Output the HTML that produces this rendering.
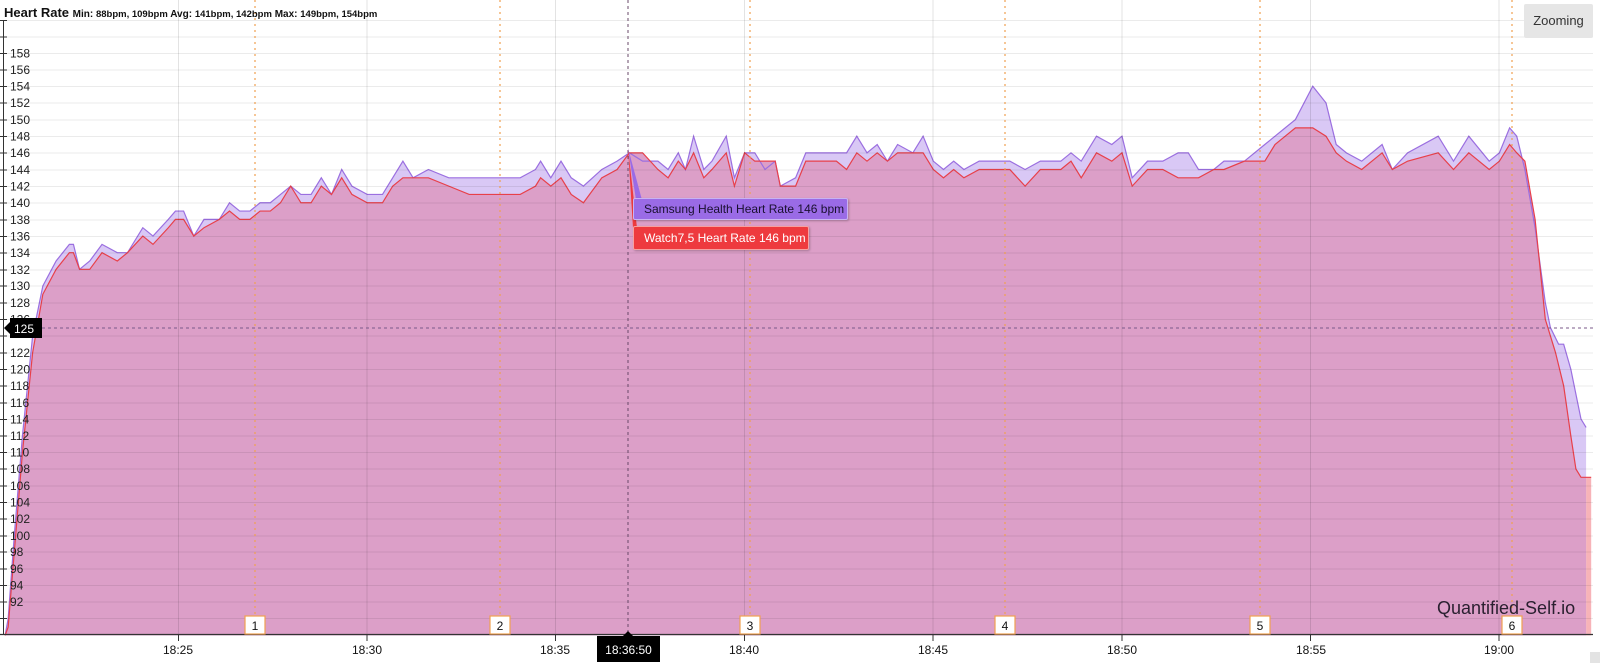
<!DOCTYPE html>
<html><head><meta charset="utf-8"><style>
html,body{margin:0;padding:0;background:#fff;width:1600px;height:663px;overflow:hidden;font-family:"Liberation Sans",sans-serif;}
.a{position:absolute;}
</style></head><body>
<svg class="a" style="left:0;top:0" width="1600" height="663" viewBox="0 0 1600 663">
<g transform="matrix(1.02,0,0,-8.32,0,1367.56)">
<polygon fill="#d9c8f5" stroke="none" points="5,88 8,90 14,100 22,112 32,124 42,130 55,133 68,135 72,135 78,132 88,133 100,135 115,134 125,134 140,137 150,136 165,138 172,139 180,139 190,136 200,138 215,138 225,140 235,139 245,139 255,140 265,140 275,141 285,142 295,141 305,141 315,143 325,141 335,144 345,142 360,141 375,141 385,143 395,145 405,143 420,144 440,143 460,143 480,143 510,143 525,144 530,145 540,143 550,145 560,143 572,142 590,144 605,145 617,146 630,145 645,145 655,144 665,146 672,144 680,148 690,144 698,145 712,148 720,143 730,146 740,146 750,144 760,145 765,142 780,143 790,146 820,146 830,146 840,148 850,146 860,147 870,145 880,147 895,146 905,148 915,145 925,144 935,145 945,144 960,145 975,145 990,145 1005,144 1020,145 1040,145 1050,146 1060,145 1075,148 1090,147 1100,148 1110,143 1125,145 1140,145 1155,146 1165,146 1175,144 1190,144 1200,145 1220,145 1240,147 1250,148 1260,149 1270,150 1287,154 1300,152 1310,147 1320,146 1335,145 1355,147 1365,144 1380,146 1410,148 1425,145 1440,148 1460,145 1470,146 1480,149 1487,148 1495,144 1505,137 1515,128 1520,125 1528,123 1533,123 1540,120 1545,117 1550,114 1555,113 1555,88"/>
<rect x="1555" y="88" width="5" height="19" fill="#f7b3b8"/>
<polygon fill="#dc9fc8" stroke="none" points="5,88 8,89 14,98 22,110 32,122 42,129 55,132 68,134 72,134 78,132 88,132 100,134 115,133 125,134 140,136 150,135 165,137 172,138 180,138 190,136 200,137 215,138 225,139 235,138 245,138 255,139 265,139 275,140 285,142 295,140 305,140 315,142 325,141 335,143 345,141 360,140 375,140 385,142 395,143 405,143 420,143 440,142 460,141 480,141 510,141 525,142 530,143 540,142 550,143 560,141 572,140 590,143 605,144 617,146 630,146 645,144 655,143 665,145 672,144 680,146 690,143 698,144 712,146 720,142 730,146 740,145 750,145 760,145 765,142 780,142 790,145 820,145 830,144 840,146 850,145 860,146 870,145 880,146 895,146 905,146 915,144 925,143 935,144 945,143 960,144 975,144 990,144 1005,142 1020,144 1040,144 1050,145 1060,143 1075,146 1090,145 1100,146 1110,142 1125,144 1140,144 1155,143 1165,143 1175,143 1190,144 1200,144 1220,145 1240,145 1250,147 1260,148 1270,149 1287,149 1300,148 1310,146 1320,145 1335,144 1355,146 1365,144 1380,145 1410,146 1425,144 1440,146 1460,144 1470,145 1480,147 1487,146 1495,145 1505,138 1515,126 1525,122 1533,118 1540,112 1545,108 1550,107 1555,107 1555,88"/>
<polyline fill="none" stroke="#9b6fe0" stroke-width="1.2" vector-effect="non-scaling-stroke" points="5,88 8,90 14,100 22,112 32,124 42,130 55,133 68,135 72,135 78,132 88,133 100,135 115,134 125,134 140,137 150,136 165,138 172,139 180,139 190,136 200,138 215,138 225,140 235,139 245,139 255,140 265,140 275,141 285,142 295,141 305,141 315,143 325,141 335,144 345,142 360,141 375,141 385,143 395,145 405,143 420,144 440,143 460,143 480,143 510,143 525,144 530,145 540,143 550,145 560,143 572,142 590,144 605,145 617,146 630,145 645,145 655,144 665,146 672,144 680,148 690,144 698,145 712,148 720,143 730,146 740,146 750,144 760,145 765,142 780,143 790,146 820,146 830,146 840,148 850,146 860,147 870,145 880,147 895,146 905,148 915,145 925,144 935,145 945,144 960,145 975,145 990,145 1005,144 1020,145 1040,145 1050,146 1060,145 1075,148 1090,147 1100,148 1110,143 1125,145 1140,145 1155,146 1165,146 1175,144 1190,144 1200,145 1220,145 1240,147 1250,148 1260,149 1270,150 1287,154 1300,152 1310,147 1320,146 1335,145 1355,147 1365,144 1380,146 1410,148 1425,145 1440,148 1460,145 1470,146 1480,149 1487,148 1495,144 1505,137 1515,128 1520,125 1528,123 1533,123 1540,120 1545,117 1550,114 1555,113"/>
<polyline fill="none" stroke="#e8404a" stroke-width="1.2" vector-effect="non-scaling-stroke" points="5,88 8,89 14,98 22,110 32,122 42,129 55,132 68,134 72,134 78,132 88,132 100,134 115,133 125,134 140,136 150,135 165,137 172,138 180,138 190,136 200,137 215,138 225,139 235,138 245,138 255,139 265,139 275,140 285,142 295,140 305,140 315,142 325,141 335,143 345,141 360,140 375,140 385,142 395,143 405,143 420,143 440,142 460,141 480,141 510,141 525,142 530,143 540,142 550,143 560,141 572,140 590,143 605,144 617,146 630,146 645,144 655,143 665,145 672,144 680,146 690,143 698,144 712,146 720,142 730,146 740,145 750,145 760,145 765,142 780,142 790,145 820,145 830,144 840,146 850,145 860,146 870,145 880,146 895,146 905,146 915,144 925,143 935,144 945,143 960,144 975,144 990,144 1005,142 1020,144 1040,144 1050,145 1060,143 1075,146 1090,145 1100,146 1110,142 1125,144 1140,144 1155,143 1165,143 1175,143 1190,144 1200,144 1220,145 1240,145 1250,147 1260,148 1270,149 1287,149 1300,148 1310,146 1320,145 1335,144 1355,146 1365,144 1380,145 1410,146 1425,144 1440,146 1460,144 1470,145 1480,147 1487,146 1495,145 1505,138 1515,126 1525,122 1533,118 1540,112 1545,108 1550,107 1560,107"/>
</g>
<g stroke="rgba(0,0,0,0.08)" stroke-width="1">
<path d="M3 20.5H1593M3 37H1593M3 53.5H1593M3 70H1593M3 86.5H1593M3 103H1593M3 120H1593M3 136.5H1593M3 153H1593M3 170H1593M3 186.5H1593M3 203H1593M3 220H1593M3 236.5H1593M3 253H1593M3 270H1593M3 286H1593M3 303H1593M3 319.5H1593M3 336H1593M3 353H1593M3 369.5H1593M3 386H1593M3 403H1593M3 419.5H1593M3 436H1593M3 452.5H1593M3 469H1593M3 486H1593M3 502.5H1593M3 519H1593M3 536H1593M3 552H1593M3 569H1593M3 585.5H1593M3 602H1593M3 618.5H1593"/>
</g>
<g stroke="rgba(0,0,0,0.11)" stroke-width="1">
<path d="M178.5 0V634M367 0V634M555.5 0V634M744.5 0V634M933 0V634M1122 0V634M1310.5 0V634M1499 0V634"/>
</g>
<g stroke="#f0a050" stroke-width="1.2" stroke-dasharray="2 4">
<path d="M255 0V616M500 0V616M750 0V616M1005 0V616M1260 0V616M1512 0V616"/>
</g>
<path d="M628 0V634" stroke="#6a4a6a" stroke-width="1" stroke-dasharray="3 3"/>
<path d="M42 328H1593" stroke="#7a5a8a" stroke-width="1" stroke-dasharray="3 3"/>
<path d="M3.5 20V634" stroke="#333" stroke-width="1"/>
<path d="M0 634.5H1593" stroke="#333" stroke-width="1.2"/>
<g stroke="#333"><path d="M178.5 634V641M367 634V641M555.5 634V641M744.5 634V641M933 634V641M1122 634V641M1310.5 634V641M1499 634V641"/>
<path d="M0 20.5H7M0 37H7M0 53.5H7M0 70H7M0 86.5H7M0 103H7M0 120H7M0 136.5H7M0 153H7M0 170H7M0 186.5H7M0 203H7M0 220H7M0 236.5H7M0 253H7M0 270H7M0 286H7M0 303H7M0 319.5H7M0 336H7M0 353H7M0 369.5H7M0 386H7M0 403H7M0 419.5H7M0 436H7M0 452.5H7M0 469H7M0 486H7M0 502.5H7M0 519H7M0 536H7M0 552H7M0 569H7M0 585.5H7M0 602H7M0 618.5H7"/></g>
<path d="M628 148L636 200L642 200Z" fill="#9a6be6"/>
<path d="M628 148L633 228L637 228Z" fill="#ee3a3e"/>
<g fill="#fff" stroke="#f0a050" stroke-width="1.2">
<rect x="245" y="616" width="20" height="18"/><rect x="490" y="616" width="20" height="18"/><rect x="740" y="616" width="20" height="18"/><rect x="995" y="616" width="20" height="18"/><rect x="1250" y="616" width="20" height="18"/><rect x="1502" y="616" width="20" height="18"/>
</g>
<g font-family="Liberation Sans, sans-serif" font-size="12" fill="#111" text-anchor="middle">
<text x="255" y="630">1</text><text x="500" y="630">2</text><text x="750" y="630">3</text><text x="1005" y="630">4</text><text x="1260" y="630">5</text><text x="1512" y="630">6</text>
<text x="178" y="654">18:25</text><text x="367" y="654">18:30</text><text x="555" y="654">18:35</text><text x="744" y="654">18:40</text><text x="933" y="654">18:45</text><text x="1122" y="654">18:50</text><text x="1311" y="654">18:55</text><text x="1499" y="654">19:00</text>
</g>
<g font-family="Liberation Sans, sans-serif" font-size="12" fill="#222">
<text x="10" y="57.5">158</text><text x="10" y="74">156</text><text x="10" y="90.5">154</text><text x="10" y="107">152</text><text x="10" y="124">150</text><text x="10" y="140.5">148</text><text x="10" y="157">146</text><text x="10" y="174">144</text><text x="10" y="190.5">142</text><text x="10" y="207">140</text><text x="10" y="224">138</text><text x="10" y="240.5">136</text><text x="10" y="257">134</text><text x="10" y="274">132</text><text x="10" y="290">130</text><text x="10" y="307">128</text><text x="10" y="323.5">126</text><text x="10" y="357">122</text><text x="10" y="373.5">120</text><text x="10" y="390">118</text><text x="10" y="407">116</text><text x="10" y="423.5">114</text><text x="10" y="440">112</text><text x="10" y="456.5">110</text><text x="10" y="473">108</text><text x="10" y="490">106</text><text x="10" y="506.5">104</text><text x="10" y="523">102</text><text x="10" y="540">100</text><text x="10" y="556">98</text><text x="10" y="573">96</text><text x="10" y="589.5">94</text><text x="10" y="606">92</text>
</g>
<path d="M4 328L10 322V318H42V338H10V334Z" fill="#000"/>
<text x="14" y="333" font-family="Liberation Sans, sans-serif" font-size="12" fill="#fff">125</text>
<path d="M597 636H623L628 631L633 636H660V662H597Z" fill="#000"/>
<text x="628.5" y="654" text-anchor="middle" font-family="Liberation Sans, sans-serif" font-size="12" fill="#fff">18:36:50</text>
<rect x="1590" y="652" width="10" height="11" fill="#e3e3e3"/>
</svg>
<div class="a" style="left:4px;top:5px;font-size:13px;font-weight:bold;color:#111;white-space:nowrap">Heart Rate <span style="font-size:10px">Min: <span style="font-size:9.5px">88bpm, 109bpm</span> Avg: <span style="font-size:9.5px">141bpm, 142bpm</span> Max: <span style="font-size:9.5px">149bpm, 154bpm</span></span></div>
<div class="a" style="left:1524px;top:4px;width:69px;height:34px;background:#e6e6e6;border-radius:2px;font-size:13px;color:#333;line-height:34px;text-align:center">Zooming</div>
<div class="a" style="left:633px;top:198px;width:215px;height:22px;background:#9a6be6;border:1px solid #c9b2f2;box-sizing:border-box;border-radius:2px;font-size:12px;line-height:20px;color:#1a1030;padding-left:10px;box-shadow:1px 1px 2px rgba(0,0,0,0.25)">Samsung Health Heart Rate 146 bpm</div>
<div class="a" style="left:633px;top:226px;width:176px;height:24px;background:#ee3a3e;border:1px solid #f7a0a0;box-sizing:border-box;border-radius:2px;font-size:12px;line-height:22px;color:#fff;padding-left:10px;box-shadow:1px 1px 2px rgba(0,0,0,0.25)">Watch7,5 Heart Rate 146 bpm</div>
<div class="a" style="left:1437px;top:598px;font-size:18px;color:#2a2030;white-space:nowrap">Quantified-Self.io</div>
</body></html>
